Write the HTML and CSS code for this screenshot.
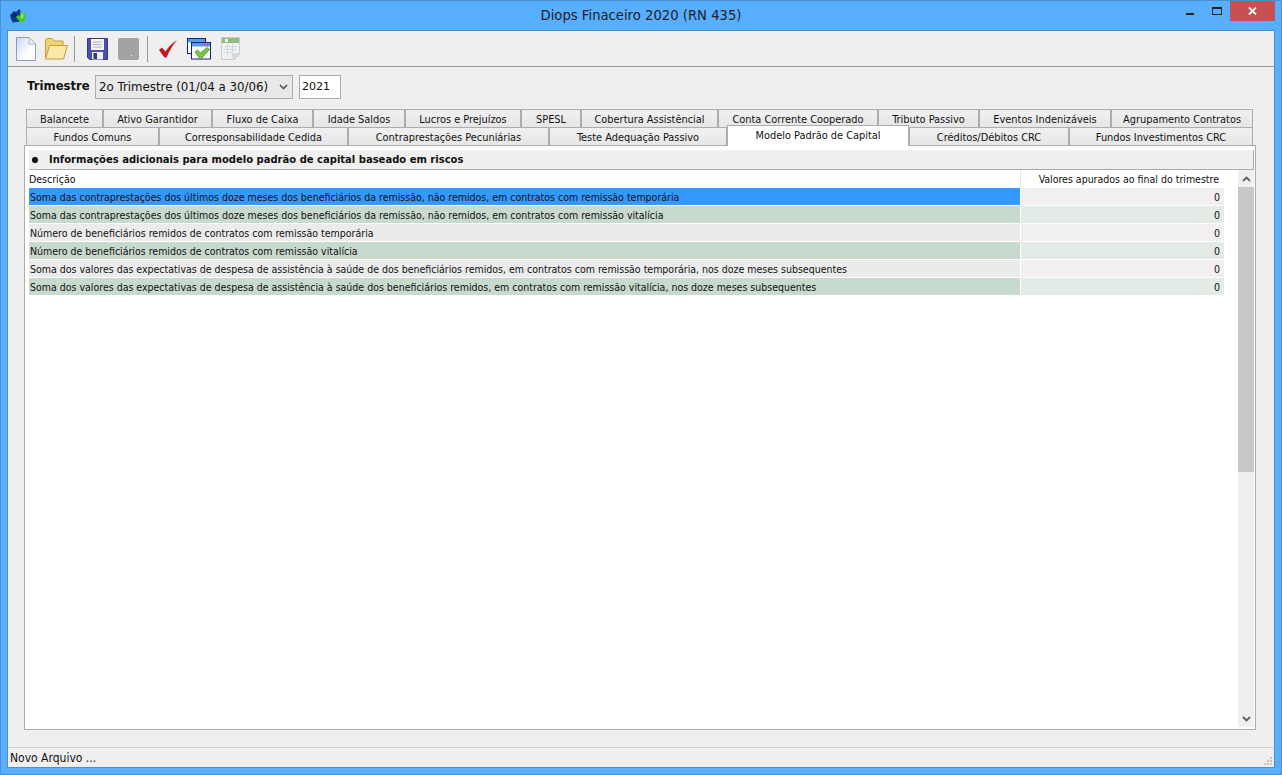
FILE: index.html
```html
<!DOCTYPE html>
<html lang="pt-BR">
<head>
    <meta charset="UTF-8">
    <title>Diops Finaceiro 2020 (RN 435)</title>
    <link rel="stylesheet" href="styles.css">
</head>
<body>
<div class="window">
    <div class="titlebar">
        <svg class="app-icon" width="17" height="16" viewBox="0 0 17 16">
            <path d="M0 7 L4 3 L6 4 L9 1 L11 3 L10 9 L9 14 L5 14 L3 15 L1 11 Z" fill="#0d3a8e"/>
            <path d="M2 8 L5 5 L7 7 L4 10 Z" fill="#07235f"/>
            <path d="M10 3 L12 6 L16 4 L15 9 L16 11 L12 15 L10 14 L6 9 L8 7 L10 8 Z" fill="#43c828"/>
            <path d="M11 6 L13 7 L14 6 L13 10 L11 11 Z" fill="#9be85e"/>
        </svg>
        <div class="title">Diops Finaceiro 2020 (RN 435)</div>
        <div class="win-buttons">
            <div class="win-min"></div>
            <div class="win-max"></div>
            <div class="win-close">
                <svg width="9" height="8" viewBox="0 0 9 8"><path d="M1 0.5 L8 7.5 M8 0.5 L1 7.5" stroke="#fff" stroke-width="1.8"/></svg>
            </div>
        </div>
    </div>

    <div class="client">
        <div class="toolbar">
            <svg class="tool tool-page" width="20" height="24" viewBox="0 0 20 24">
                <defs>
                    <linearGradient id="pageFill" x1="0" y1="0" x2="1" y2="1"><stop offset="0" stop-color="#c5d9f6"/><stop offset="0.65" stop-color="#ffffff"/></linearGradient>
                </defs>
                <path d="M0.5 0.5 H13 L19.5 7 V23.5 H0.5 Z" fill="url(#pageFill)" stroke="#9297c0"/>
                <path d="M13 0.5 V7 H19.5 Z" fill="#eef0f5" stroke="#b4b8d0"/>
            </svg>
            <svg class="tool tool-folder" width="24" height="23" viewBox="0 0 24 23">
                <path d="M1.5 21 V4 Q1.5 1.5 4 1.5 H8 L10.5 4 H19 V8" fill="#f0d27a" stroke="#c99c30"/>
                <path d="M1.5 22 L5.5 8.5 H23.5 L19.5 22 Z" fill="#fbe7a6" stroke="#c99c30"/>
            </svg>
            <div class="tool-sep sep-first"></div>
            <svg class="tool tool-save" width="21" height="22" viewBox="0 0 21 22">
                <path d="M0.5 0.5 H20.5 V21.5 H2.5 L0.5 19.5 Z" fill="#4a50ad" stroke="#333880"/>
                <rect x="4" y="1" width="13" height="11" fill="#f5f5f5"/>
                <path d="M6 4 H15 M6 6.5 H15 M6 9 H15" stroke="#a9acc9"/>
                <rect x="5" y="14" width="11" height="7.5" fill="#ececf4"/>
                <rect x="6.5" y="15" width="3.5" height="6" fill="#333880"/>
            </svg>
            <div class="tool-grey"><span class="grey-dot"></span></div>
            <div class="tool-sep sep-second"></div>
            <svg class="tool tool-check" width="18" height="18" viewBox="0 0 18 18">
                <path d="M0 10 L3 7.5 L6.5 11.5 Q10.5 5 18 0 Q12 7 7.5 17.5 H5.5 Z" fill="#c8141e"/>
            </svg>
            <svg class="tool tool-windows" width="24" height="22" viewBox="0 0 24 22">
                <rect x="0.5" y="0.5" width="18" height="15" fill="#fff" stroke="#14208a"/>
                <rect x="1" y="1" width="17" height="3.5" fill="#4aa3e8"/>
                <rect x="4.5" y="4.5" width="19" height="16.5" fill="#fff" stroke="#14208a"/>
                <rect x="5" y="5" width="18" height="3.5" fill="#4aa3e8"/>
                <rect x="17" y="6" width="1.5" height="1.5" fill="#d43"/>
                <rect x="20" y="6" width="1.5" height="1.5" fill="#d43"/>
                <path d="M8 14 L10.5 12 L13.5 15 L20 9.5 L22.5 11.5 L13.5 21.5 Z" fill="#7cc83c" stroke="#3f8f2a" stroke-width="0.8"/>
            </svg>
            <svg class="tool tool-sheet" width="19" height="23" viewBox="0 0 19 23">
                <path d="M0.5 0.5 H18.5 V17 L13 22.5 H0.5 Z" fill="#f2f2f2" stroke="#c6c6c6"/>
                <rect x="1" y="1" width="17" height="5" fill="#7fb56a"/>
                <rect x="4" y="2" width="3" height="3" fill="#fff"/>
                <path d="M3 9.5 H16 M3 12.5 H16 M3 15.5 H12 M6.5 7 V20 M11.5 7 V20" stroke="#c9d5e2"/>
                <path d="M13 22.5 V17 H18.5 Z" fill="#ddd" stroke="#c6c6c6"/>
            </svg>
        </div>

        <div class="content">
            <div class="period">
                <span class="period-label">Trimestre</span>
                <div class="select">
                    <span>2o Trimestre (01/04 a 30/06)</span>
                    <svg width="9" height="6" viewBox="0 0 9 6"><path d="M1 1 L4.5 4.5 L8 1" fill="none" stroke="#555" stroke-width="1.6"/></svg>
                </div>
                <div class="year">2021</div>
            </div>

            <div class="tabs">
                <div class="tab-row tab-row-top">
                    <div class="tab">Balancete</div>
                    <div class="tab">Ativo Garantidor</div>
                    <div class="tab">Fluxo de Caixa</div>
                    <div class="tab">Idade Saldos</div>
                    <div class="tab">Lucros e Prejuízos</div>
                    <div class="tab">SPESL</div>
                    <div class="tab">Cobertura Assistêncial</div>
                    <div class="tab">Conta Corrente Cooperado</div>
                    <div class="tab">Tributo Passivo</div>
                    <div class="tab">Eventos Indenizáveis</div>
                    <div class="tab">Agrupamento Contratos</div>
                </div>
                <div class="tab-row tab-row-bottom">
                    <div class="tab">Fundos Comuns</div>
                    <div class="tab">Corresponsabilidade Cedida</div>
                    <div class="tab">Contraprestações Pecuniárias</div>
                    <div class="tab">Teste Adequação Passivo</div>
                    <div class="tab tab-active">Modelo Padrão de Capital</div>
                    <div class="tab">Créditos/Débitos CRC</div>
                    <div class="tab">Fundos Investimentos CRC</div>
                </div>
            </div>

            <div class="panel">
                <div class="panel-head"><span class="bullet"></span>Informações adicionais para modelo padrão de capital baseado em riscos</div>
                <div class="grid-wrap">
                    <div class="grid">
                        <div class="row row-head">
                            <div class="cell-desc">Descrição</div>
                            <div class="cell-val">Valores apurados ao final do trimestre</div>
                        </div>
                        <div class="row row-selected">
                            <div class="cell-desc">Soma das contraprestações dos últimos doze meses dos beneficiários da remissão, não remidos, em contratos com remissão temporária</div>
                            <div class="cell-val">0</div>
                        </div>
                        <div class="row row-green">
                            <div class="cell-desc">Soma das contraprestações dos últimos doze meses dos beneficiários da remissão, não remidos, em contratos com remissão vitalícia</div>
                            <div class="cell-val">0</div>
                        </div>
                        <div class="row row-grey">
                            <div class="cell-desc">Número de beneficiários remidos de contratos com remissão temporária</div>
                            <div class="cell-val">0</div>
                        </div>
                        <div class="row row-green">
                            <div class="cell-desc">Número de beneficiários remidos de contratos com remissão vitalícia</div>
                            <div class="cell-val">0</div>
                        </div>
                        <div class="row row-grey">
                            <div class="cell-desc">Soma dos valores das expectativas de despesa de assistência à saúde de dos beneficiários remidos, em contratos com remissão temporária, nos doze meses subsequentes</div>
                            <div class="cell-val">0</div>
                        </div>
                        <div class="row row-green">
                            <div class="cell-desc">Soma dos valores das expectativas de despesa de assistência à saúde dos beneficiários remidos, em contratos com remissão vitalícia, nos doze meses subsequentes</div>
                            <div class="cell-val">0</div>
                        </div>
                    </div>
                    <div class="scrollbar">
                        <div class="scroll-btn">
                            <svg width="9" height="6" viewBox="0 0 9 6"><path d="M1 5 L4.5 1.5 L8 5" fill="none" stroke="#606060" stroke-width="1.8"/></svg>
                        </div>
                        <div class="scroll-thumb"></div>
                        <div class="scroll-rest"></div>
                        <div class="scroll-btn">
                            <svg width="9" height="6" viewBox="0 0 9 6"><path d="M1 1 L4.5 4.5 L8 1" fill="none" stroke="#606060" stroke-width="1.8"/></svg>
                        </div>
                    </div>
                </div>
            </div>
        </div>

        <div class="statusbar">
            <span>Novo Arquivo ...</span>
            <svg class="grip" width="9" height="9" viewBox="0 0 9 9" fill="#c4c4c4">
                <rect x="6" y="0" width="2" height="2"/>
                <rect x="3" y="3" width="2" height="2"/><rect x="6" y="3" width="2" height="2"/>
                <rect x="0" y="6" width="2" height="2"/><rect x="3" y="6" width="2" height="2"/><rect x="6" y="6" width="2" height="2"/>
            </svg>
        </div>
    </div>
</div>
</body>
</html>
```

FILE: styles.css
```css
html, body {
    margin: 0;
    padding: 0;
}
body {
    font-family: "DejaVu Sans", sans-serif;
    font-size: 11px;
    color: #111;
    overflow: hidden;
}
.window {
    box-sizing: border-box;
    width: 1282px;
    height: 775px;
    display: flex;
    flex-direction: column;
    background-color: #58aeff;
    border: 1px solid #4a8fd0;
    padding: 0 6px 6px 6px;
}
.titlebar {
    height: 29px;
    flex: none;
    display: flex;
    align-items: flex-start;
}
.app-icon {
    margin: 7px 0 0 3px;
}
.title {
    flex: 1;
    text-align: center;
    font-size: 13.2px;
    line-height: 29px;
    color: #222;
    padding-left: 69px;
}
.win-buttons {
    display: flex;
    align-items: flex-start;
}
.win-min {
    width: 8px;
    height: 2px;
    background-color: #222;
    margin: 12px 18px 0 0;
}
.win-max {
    box-sizing: border-box;
    width: 10px;
    height: 8px;
    border: 1px solid #222;
    border-top-width: 2px;
    margin: 6px 8px 0 0;
}
.win-close {
    width: 45px;
    height: 20px;
    background-color: #c75050;
    display: flex;
    align-items: center;
    justify-content: center;
}
.client {
    flex: 1;
    min-height: 0;
    display: flex;
    flex-direction: column;
    background-color: #efefef;
    border: 1px solid #4a8fd0;
}
.toolbar {
    height: 35px;
    flex: none;
    display: flex;
    align-items: center;
    padding-left: 8px;
    border-bottom: 1px solid #999;
}
.tool {
    flex: none;
}
.tool-page {
    margin-right: 8px;
}
.tool-folder {
    margin-right: 6px;
}
.tool-save {
    margin-right: 10px;
}
.tool-check {
    margin-right: 10px;
}
.tool-windows {
    margin-right: 10px;
}
.tool-sheet {
    opacity: 0.85;
}
.tool-sep {
    width: 1px;
    height: 26px;
    background-color: #999;
}
.sep-first {
    margin-right: 12px;
}
.sep-second {
    margin-right: 11px;
}
.tool-grey {
    width: 21px;
    height: 22px;
    background-color: #a3a3a3;
    border-radius: 2px;
    margin-right: 8px;
    position: relative;
}
.grey-dot {
    position: absolute;
    left: 13px;
    top: 17px;
    width: 1px;
    height: 1px;
    background-color: #fff;
}
.content {
    flex: 1;
    min-height: 0;
    display: flex;
    flex-direction: column;
    padding: 8px 18px 17px 16px;
}
.period {
    display: flex;
    align-items: center;
    height: 24px;
    padding-left: 3px;
    flex: none;
}
.period-label {
    font-weight: bold;
    font-size: 11.7px;
    width: 68px;
    margin-bottom: 3px;
}
.select {
    box-sizing: border-box;
    width: 198px;
    height: 24px;
    display: flex;
    align-items: center;
    justify-content: space-between;
    padding: 0 4px 0 3px;
    font-size: 11.8px;
    background-color: #e8e8e8;
    border: 1px solid #acacac;
}
.year {
    box-sizing: border-box;
    width: 42px;
    height: 24px;
    margin-left: 6px;
    padding-left: 2px;
    line-height: 21px;
    font-size: 11px;
    background-color: #fff;
    border: 1px solid #acacac;
}
.tabs {
    margin: 10px 0 0 2px;
    width: 1227px;
    flex: none;
}
.tab-row {
    display: grid;
    height: 18px;
}
.tab-row-top {
    grid-template-columns: 77px 109px 101px 92px 116px 60px 137px 160px 101px 132px 142px;
}
.tab-row-bottom {
    grid-template-columns: 133px 189px 201px 178px 182px 160px 184px;
}
.tab {
    box-sizing: border-box;
    border: 1px solid #acacac;
    background: linear-gradient(#f0f0f0, #e5e5e5);
    text-align: center;
    font-family: "DejaVu Sans Condensed", "DejaVu Sans", sans-serif;
    font-size: 10.9px;
    line-height: 19px;
    white-space: nowrap;
}
.tab-active {
    background: #fff;
    height: 21px;
    margin-top: -2px;
    border-bottom: none;
    position: relative;
    line-height: 20px;
}
.panel {
    flex: 1;
    min-height: 0;
    display: flex;
    flex-direction: column;
    background-color: #fff;
    border: 1px solid #acacac;
    padding: 4px 1px 2px 4px;
}
.panel-head {
    height: 19px;
    flex: none;
    display: flex;
    align-items: center;
    font-weight: bold;
    background-color: #efefef;
    border-right: 1px solid #acacac;
    border-bottom: 1px solid #acacac;
    font-size: 10px;
}
.bullet {
    width: 6px;
    height: 6px;
    border-radius: 50%;
    background-color: #000;
    margin: 0 11px 0 3px;
}
.grid-wrap {
    flex: 1;
    min-height: 0;
    display: flex;
}
.grid {
    width: 1195px;
    flex: none;
    margin-right: 14px;
}
.row {
    display: flex;
    height: 18px;
    line-height: 18px;
    font-family: "DejaVu Sans Condensed", "DejaVu Sans", sans-serif;
    font-size: 10.5px;
    white-space: nowrap;
}
.cell-desc {
    flex: 1;
    padding-left: 1px;
    overflow: hidden;
    border-bottom: 1px solid #fff;
}
.cell-val {
    width: 204px;
    flex: none;
    box-sizing: border-box;
    text-align: right;
    padding-right: 4px;
    border-left: 1px solid #fff;
    border-bottom: 1px solid #fff;
}
.row-head {
    line-height: 19px;
}
.row-head .cell-desc {
    padding-left: 0;
    background-color: #fff;
}
.row-head .cell-val {
    padding-right: 5px;
    border-left-color: #e6e6e6;
    background-color: #fff;
}
.row-selected .cell-desc {
    background-color: #3399ff;
}
.row-selected .cell-val,
.row-grey .cell-val {
    background-color: #f1efef;
}
.row-grey .cell-desc {
    background-color: #ecebeb;
}
.row-green .cell-desc {
    background-color: #c8d9ce;
}
.row-green .cell-val {
    background-color: #e2ebe5;
}
.scrollbar {
    width: 16px;
    flex: none;
    display: flex;
    flex-direction: column;
    background-color: #efefef;
}
.scroll-btn {
    height: 17px;
    flex: none;
    display: flex;
    align-items: center;
    justify-content: center;
}
.scroll-thumb {
    height: 285px;
    flex: none;
    background-color: #c8c8c8;
}
.scroll-rest {
    flex: 1;
}
.statusbar {
    height: 19px;
    flex: none;
    display: flex;
    align-items: center;
    justify-content: space-between;
    padding: 0 1px 0 2px;
    border-top: 1px solid #d2d2d2;
    font-family: "DejaVu Sans Condensed", "DejaVu Sans", sans-serif;
    font-size: 12px;
}
.grip {
    align-self: flex-end;
    margin-bottom: 1px;
}
```
